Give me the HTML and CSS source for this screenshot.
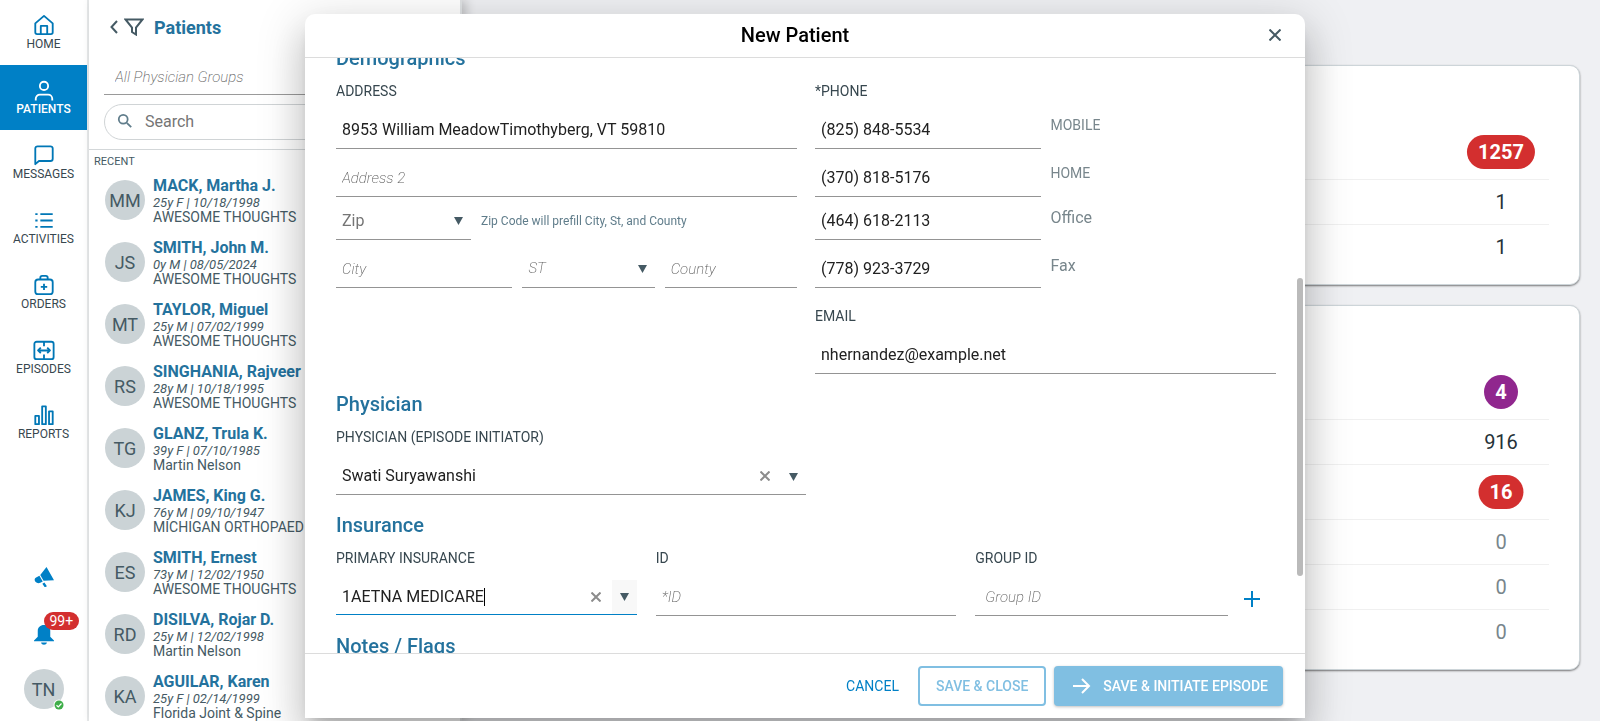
FILE: index.html
```
<!DOCTYPE html>
<html lang="en">
<head>
<meta charset="utf-8">
<meta name="viewport" content="width=device-width, initial-scale=1">
<title>New Patient</title>
<link rel="stylesheet" href="styles.css">
</head>
<body>
<div class="app">
  <nav class="nav">
    <a class="nav-item" href="#"><svg class="icon" viewBox="0 0 24 24"><path d="M2.500 10.200 12 2l9.500 8.200V20a2 2 0 0 1-2 2h-15a2 2 0 0 1-2-2z"/><path d="M8.500 22v-9h7v9"/></svg><span>HOME</span></a>
    <a class="nav-item nav-item-active" href="#"><svg class="icon" viewBox="0 0 24 24"><circle cx="12" cy="7.500" r="4.500"/><path d="M3 23.500v-2a4.500 4.500 0 0 1 4.500-4.500h9a4.500 4.500 0 0 1 4.500 4.500v2"/></svg><span>PATIENTS</span></a>
    <a class="nav-item" href="#"><svg class="icon" viewBox="0 0 24 24"><path d="M2.500 22V5a2.500 2.500 0 0 1 2.500-2.500h14a2.500 2.500 0 0 1 2.500 2.500v11a2.500 2.500 0 0 1-2.500 2.500H6.500z"/></svg><span>MESSAGES</span></a>
    <a class="nav-item" href="#"><svg class="icon" viewBox="0 0 24 24"><path d="M8 5.500h13.500M8 12.500h13.500M8 19.500h13.500M2.500 5.500h2.500M2.500 12.500h2.500M2.500 19.500h2.500"/></svg><span>ACTIVITIES</span></a>
    <a class="nav-item" href="#"><svg class="icon icon-wide" viewBox="0 0 24 24"><rect x="2.500" y="6" width="19" height="16" rx="3"/><path d="M8 6V4a2 2 0 0 1 2-2h4a2 2 0 0 1 2 2v2M12 10.500v7M8.500 14h7"/></svg><span>ORDERS</span></a>
    <a class="nav-item" href="#"><svg class="icon icon-wide" viewBox="0 0 24 24"><path d="M12 3H4a2.500 2.500 0 0 0-2.500 2.500v14A2.500 2.500 0 0 0 4 22h16a2.500 2.500 0 0 0 2.500-2.500v-14A2.500 2.500 0 0 0 20 3h-8M12 3v5M12 17v5M5.500 12.500h13M8.500 9.500l-3 3 3 3M15.500 9.500l3 3-3 3"/></svg><span>EPISODES</span></a>
    <a class="nav-item" href="#"><svg class="icon icon-wide" viewBox="0 0 24 24"><path d="M2.500 13h4v9h-4zM10 2.500h4V22h-4zM17.500 8h4v14h-4z"/></svg><span>REPORTS</span></a>
    <div class="nav-tools">
      <button class="tool" aria-label="Announcements"><svg class="icon-solid" viewBox="0 0 24 24"><path d="M15 0 24 16l-12.500.5L7.500 9.500zM6.500 10.500l4 7-3 1.500C2 21-1.500 15 2.500 12.500zM10 20l2.500-1.500 3 4.500-2.500 1.500z"/></svg></button>
      <button class="tool" aria-label="Notifications"><svg class="icon-solid" viewBox="0 0 24 24"><path d="M12 0C7.500 0 4.500 3 4.500 7v7L0 18.500v1h24v-1L19.500 14V7c0-4-3-7-7.500-7zM8.500 21h7c-.5 3.500-6.500 3.500-7 0z"/></svg><span class="badge">99+</span></button>
      <button class="tool avatar">TN<svg class="status" viewBox="0 0 12 12"><circle cx="6" cy="6" r="5.500" fill="#fff"/><circle cx="6" cy="6" r="4.500" fill="#3fae49"/><path d="M3.500 6.200l1.800 1.700 3.200-3.400" fill="none" stroke="#fff" stroke-width="1.200"/></svg></button>
    </div>
  </nav>

  <aside class="panel">
    <header class="panel-head">
      <button class="plain" aria-label="Back"><svg class="chevron" viewBox="0 0 8 14"><path d="M7 1 1.500 7 7 13"/></svg></button>
      <button class="plain" aria-label="Filter"><svg class="funnel" viewBox="0 0 20 18"><path d="M1.500 1.500h17L12 9.500V16.500L8 14V9.500z"/></svg></button>
      <h2>Patients</h2>
    </header>
    <div class="panel-filters">
      <input class="group-input" aria-label="Physician group" placeholder="All Physician Groups">
      <label class="search"><svg viewBox="0 0 18 18"><circle cx="7" cy="7" r="5"/><path d="M11 11l5 5"/></svg><input aria-label="Search" placeholder="Search"></label>
    </div>
    <div class="recent">RECENT</div>
    <ul class="patients">
      <li><span class="avatar">MM</span><div><a href="#">MACK, Martha J.</a><em>25y F | 10/18/1998</em><p>AWESOME THOUGHTS</p></div></li>
      <li><span class="avatar">JS</span><div><a href="#">SMITH, John M.</a><em>0y M | 08/05/2024</em><p>AWESOME THOUGHTS</p></div></li>
      <li><span class="avatar">MT</span><div><a href="#">TAYLOR, Miguel</a><em>25y M | 07/02/1999</em><p>AWESOME THOUGHTS</p></div></li>
      <li><span class="avatar">RS</span><div><a href="#">SINGHANIA, Rajveer</a><em>28y M | 10/18/1995</em><p>AWESOME THOUGHTS</p></div></li>
      <li><span class="avatar">TG</span><div><a href="#">GLANZ, Trula K.</a><em>39y F | 07/10/1985</em><p>Martin Nelson</p></div></li>
      <li><span class="avatar">KJ</span><div><a href="#">JAMES, King G.</a><em>76y M | 09/10/1947</em><p>MICHIGAN ORTHOPAED</p></div></li>
      <li><span class="avatar">ES</span><div><a href="#">SMITH, Ernest</a><em>73y M | 12/02/1950</em><p>AWESOME THOUGHTS</p></div></li>
      <li><span class="avatar">RD</span><div><a href="#">DISILVA, Rojar D.</a><em>25y M | 12/02/1998</em><p>Martin Nelson</p></div></li>
      <li><span class="avatar">KA</span><div><a href="#">AGUILAR, Karen</a><em>25y F | 02/14/1999</em><p>Florida Joint &amp; Spine</p></div></li>
    </ul>
  </aside>

  <main class="board">
    <section class="card">
      <ul>
        <li><span class="pill">1257</span></li>
        <li><span>1</span></li>
        <li><span>1</span></li>
      </ul>
    </section>
    <section class="card">
      <ul>
        <li><span class="pill pill-purple">4</span></li>
        <li><span>916</span></li>
        <li><span class="pill">16</span></li>
        <li><span class="zero">0</span></li>
        <li><span class="zero">0</span></li>
        <li><span class="zero">0</span></li>
      </ul>
    </section>
  </main>
</div>

<div class="overlay">
  <form class="dialog" role="dialog" aria-labelledby="dialog-title">
    <header class="dialog-head">
      <h1 id="dialog-title">New Patient</h1>
      <button type="button" class="plain close" aria-label="Close"><svg viewBox="0 0 12 12"><path d="M.5.5l11 11M11.500.5l-11 11"/></svg></button>
    </header>

    <div class="dialog-body">
      <div class="scrolled">
        <section class="section">
          <h2>Demographics</h2>
          <div class="halves">
            <div>
              <label class="caption" for="address">ADDRESS</label>
              <div class="stack">
                <input class="field" id="address" value="8953 William MeadowTimothyberg, VT 59810">
                <input class="field" aria-label="Address 2" placeholder="Address 2">
                <div class="zip-row">
                  <div class="pick"><select class="field gray" aria-label="Zip"><option>Zip</option></select><svg class="caret" viewBox="0 0 9 8"><path d="M0 0h9L4.500 8z"/></svg></div>
                  <span class="hint">Zip Code will prefill City, St, and County</span>
                </div>
                <div class="city-row">
                  <input class="field" aria-label="City" placeholder="City">
                  <div class="pick"><select class="field ghost" aria-label="State"><option>ST</option></select><svg class="caret" viewBox="0 0 9 8"><path d="M0 0h9L4.500 8z"/></svg></div>
                  <input class="field" aria-label="County" placeholder="County">
                </div>
              </div>
            </div>
            <div>
              <label class="caption" for="mobile">*PHONE</label>
              <div class="stack">
                <div class="phone"><input class="field" id="mobile" value="(825) 848-5534"><label class="small" for="mobile">MOBILE</label></div>
                <div class="phone"><input class="field" id="home" value="(370) 818-5176"><label class="small" for="home">HOME</label></div>
                <div class="phone"><input class="field" id="office" value="(464) 618-2113"><label for="office">Office</label></div>
                <div class="phone"><input class="field" id="fax" value="(778) 923-3729"><label for="fax">Fax</label></div>
              </div>
              <div class="email">
                <label class="caption" for="email">EMAIL</label>
                <input class="field" id="email" type="email" value="nhernandez@example.net">
              </div>
            </div>
          </div>
        </section>

        <section class="section">
          <h2>Physician</h2>
          <div class="physician">
            <label class="caption" for="physician">PHYSICIAN (EPISODE INITIATOR)</label>
            <div class="field combo">
              <input id="physician" value="Swati Suryawanshi">
              <span class="space"></span>
              <button type="button" class="clear" aria-label="Clear physician"><svg viewBox="0 0 10 10"><path d="M.5.5l9 9M9.500.5l-9 9"/></svg></button>
              <button type="button" class="drop" aria-label="Open physicians"><svg viewBox="0 0 9 8"><path d="M0 0h9L4.500 8z"/></svg></button>
            </div>
          </div>
        </section>

        <section class="section">
          <h2>Insurance</h2>
          <div class="insurance">
            <div>
              <label class="caption" for="insurer">PRIMARY INSURANCE</label>
              <div class="field combo combo-active">
                <input id="insurer" value="1AETNA MEDICARE"><span class="cursor"></span>
                <span class="space"></span>
                <button type="button" class="clear" aria-label="Clear insurance"><svg viewBox="0 0 10 10"><path d="M.5.5l9 9M9.500.5l-9 9"/></svg></button>
                <button type="button" class="drop" aria-label="Open insurances"><svg viewBox="0 0 9 8"><path d="M0 0h9L4.500 8z"/></svg></button>
              </div>
            </div>
            <div>
              <label class="caption" for="policy">ID</label>
              <input class="field" id="policy" placeholder="*ID">
            </div>
            <div class="group-cell">
              <div>
                <label class="caption" for="group">GROUP ID</label>
                <input class="field field-wide-pad" id="group" placeholder="Group ID">
              </div>
              <button type="button" class="plain add" aria-label="Add insurance"><svg viewBox="0 0 16 16"><path d="M8 0v16M0 8h16"/></svg></button>
            </div>
          </div>
        </section>

        <section class="section">
          <h2>Notes / Flags</h2>
        </section>
      </div>
      <span class="scroll-thumb"></span>
    </div>

    <footer class="dialog-foot">
      <button type="button" class="btn btn-text">CANCEL</button>
      <button type="button" class="btn btn-outline">SAVE &amp; CLOSE</button>
      <button type="button" class="btn btn-fill"><svg viewBox="0 0 18 16"><path d="M0 8h16M9 1l7 7-7 7"/></svg>SAVE &amp; INITIATE EPISODE</button>
    </footer>
  </form>
</div>
</body>
</html>
```

FILE: styles.css
```
* { box-sizing: border-box; }

body {
  margin: 0;
  font-family: Roboto, "Liberation Sans", sans-serif;
  font-size: 16px;
  color: #263238;
  overflow: hidden;
}

h1, h2, p, ul { margin: 0; padding: 0; }
ul { list-style: none; }
a { text-decoration: none; }
button, input, select { font: inherit; color: inherit; }
button { padding: 0; border: 0; background: none; cursor: pointer; }
svg { display: block; fill: none; stroke: currentColor; }

.app { display: flex; height: 100vh; background: #eff0f3; }

/* Navigation rail */
.nav {
  flex: none;
  display: flex;
  flex-direction: column;
  width: 89px;
  background: #fff;
  border-right: 2px solid #e8eaeb;
}
.nav-item {
  display: flex;
  flex-direction: column;
  align-items: center;
  height: 65px;
  padding-top: 14px;
  font-size: 12px;
  line-height: 16px;
  color: #37474f;
}
.icon { width: 22px; height: 22px; stroke: #0077b6; stroke-width: 2; stroke-linejoin: round; }
.icon-wide { width: 24px; }
.nav-item-active { background: #0080c6; color: #fff; font-weight: 500; }
.nav-item-active .icon { stroke: #fff; }
.nav-tools {
  display: flex;
  flex-direction: column;
  align-items: center;
  margin-top: auto;
  padding-bottom: 12px;
}
.tool { position: relative; margin-bottom: 38px; color: #0080c6; }
.tool.avatar { margin: -14px 0 0; color: #455a64; }
.icon-solid { width: 20px; height: 20px; fill: currentColor; stroke: none; }
.badge {
  position: absolute;
  left: 10px;
  top: -13px;
  padding: 0 6px;
  border-radius: 9px;
  background: #d32f2f;
  color: #fff;
  font-size: 14px;
  line-height: 18px;
}
.status { position: absolute; right: -1px; bottom: -2px; width: 12px; height: 12px; stroke: none; }
.avatar {
  flex: none;
  display: flex;
  align-items: center;
  justify-content: center;
  width: 40px;
  height: 40px;
  border-radius: 50%;
  background: #cbd3d6;
  color: #455a64;
  font-size: 18px;
}

/* Patient list */
.panel {
  flex: none;
  width: 373px;
  background: #fff;
  border-right: 2px solid #dfe2e4;
  box-shadow: 4px 0 10px rgba(0, 0, 0, .2);
  z-index: 1;
}
.plain { display: block; color: #455a64; }
.panel-head { display: flex; align-items: center; gap: 6px; height: 52px; padding: 2px 0 0 21px; }
.panel-head h2 { margin-left: 4px; padding-top: 1px; font-size: 18px; line-height: 24px; font-weight: 700; color: #24729d; }
.chevron { width: 8px; height: 14px; stroke-width: 2; }
.funnel { width: 20px; height: 18px; stroke-width: 2; }
.panel-filters { padding: 9px 15px 9px; border-bottom: 1px solid #d3d7d9; }
.group-input {
  display: block;
  width: 100%;
  height: 34px;
  padding: 0 11px 2px;
  border: 0;
  border-bottom: 1px solid #9a9a9a;
  font-size: 15px;
}
.group-input::placeholder, .field::placeholder, .ghost { color: #616161; font-style: italic; font-weight: 200; opacity: 1; }
.search {
  display: flex;
  align-items: center;
  gap: 12px;
  height: 36px;
  margin-top: 9px;
  padding: 0 0 2px 12px;
  border: 1px solid #d0d4d6;
  border-radius: 18px;
}
.search svg { width: 16px; height: 16px; color: #607d8b; stroke-width: 2; }
.search input { flex: 1; min-width: 0; border: 0; background: none; outline: 0; padding: 0; }
.search input::placeholder { color: #757575; opacity: 1; }
.recent { padding: 4px 5px 0; font-size: 11px; line-height: 15px; color: #455a64; }
.patients li { display: flex; align-items: center; gap: 8px; height: 62px; padding: 0 16px; }
.patients a, .patients em, .patients p { display: block; white-space: nowrap; line-height: 15px; font-size: 14px; color: #455a64; }
.patients a { font-size: 16px; line-height: 20px; font-weight: 700; color: #24729d; }
.patients em { font-size: 13px; line-height: 14px; }

/* Dashboard cards */
.board { flex: 1; display: flex; flex-direction: column; gap: 20px; padding: 65px 20px 0; }
.card {
  padding: 59px 30px 15px;
  background: #fff;
  border: 1px solid #cdd5d9;
  border-radius: 10px;
  box-shadow: 0 1px 2px rgba(0, 0, 0, .5);
}
.card li { display: flex; justify-content: flex-end; padding: 10px 0; border-bottom: 1px solid #f0f0f0; }
.card li:last-child { border-bottom: 0; }
.card span {
  min-width: 34px;
  margin-right: 48px;
  font-size: 20px;
  line-height: 24px;
  text-align: center;
  translate: 50% 0;
}
.card .pill { padding: 5px 11px; border-radius: 17px; background: #d32f2f; color: #fff; font-weight: 700; }
.card .pill-purple { padding: 5px 0; background: #90278e; }
.card .zero { color: #78868c; }

/* Dialog */
.overlay {
  position: fixed;
  inset: 0;
  z-index: 2;
  display: flex;
  justify-content: center;
  padding: 14px 0 3px 10px;
}
.dialog {
  display: flex;
  flex-direction: column;
  width: 1000px;
  max-width: 100%;
  background: #fff;
  border-radius: 10px 10px 0 0;
  box-shadow: 0 11px 15px -7px rgba(0, 0, 0, .2), 0 24px 38px 3px rgba(0, 0, 0, .14), 0 9px 46px 8px rgba(0, 0, 0, .12);
}
.dialog-head {
  position: relative;
  display: flex;
  align-items: center;
  justify-content: center;
  height: 44px;
  padding-bottom: 1px;
  border-bottom: 1px solid #dcdcdc;
}
.dialog-head h1 { margin-right: 20px; font-size: 20px; line-height: 24px; font-weight: 500; color: #000; }
.close { position: absolute; right: 24px; top: 15px; }
.close svg { width: 12px; height: 12px; stroke-width: 2; }
.dialog-body { position: relative; flex: 1; min-height: 0; overflow: hidden; padding: 0 29px 0 31px; }
.scrolled { margin-top: -12px; }
.scroll-thumb { position: absolute; right: 2px; top: 37%; width: 6px; height: 50%; border-radius: 3px; background: #bababa; }

.section { margin-bottom: 18px; }
.section h2 { margin-bottom: 11px; font-size: 20px; line-height: 24px; font-weight: 500; color: #24729d; }
.caption { display: block; margin-bottom: 12px; font-size: 14px; line-height: 20px; color: #37474f; }
.halves { display: grid; grid-template-columns: 1fr 1fr; gap: 18px; }
.stack { display: grid; grid-template-rows: 36px 36px 31px 36px; row-gap: 12px; }
.stack > :nth-child(3) { margin-top: -5px; }
.field {
  display: block;
  width: 100%;
  min-width: 0;
  height: 36px;
  padding: 0 6px 3px;
  border: 0;
  border-bottom: 1px solid #949494;
  border-radius: 0;
  outline: 0;
  background: none;
  font-size: 16px;
  color: #212121;
}
.field::placeholder { font-size: 15px; }
.field.ghost { font-size: 15px; color: #616161; }
.field.gray { color: #757575; }
.field-wide-pad { padding-left: 10px; }
.pick { position: relative; }
.pick select { appearance: none; }
.caret { position: absolute; right: 8px; top: 13px; width: 9px; height: 8px; fill: #455a64; stroke: none; pointer-events: none; }
.zip-row { display: flex; align-items: center; gap: 10px; }
.zip-row .pick { width: 135px; }
.hint { padding-bottom: 2px; font-size: 12px; line-height: 16px; color: #607d8b; }
.city-row { display: grid; grid-template-columns: 4fr 3fr 3fr; gap: 10px; }
.phone { display: grid; grid-template-columns: 1fr 1fr; gap: 10px; }
.phone label { line-height: 28px; color: #78868c; }
.phone .small { font-size: 14px; line-height: 24px; }
.email { margin-top: 18px; }
.physician { width: 50%; }
.combo { display: flex; align-items: stretch; padding: 0; }
.combo input {
  field-sizing: content;
  min-width: 0;
  padding: 0 0 3px 6px;
  border: 0;
  outline: 0;
  background: none;
}
.combo .space { flex: 1; }
.cursor { width: 1px; margin: 8px 0; background: #000; }
.clear { width: 32px; padding-bottom: 1px; color: #8c8c8c; }
.clear svg { width: 10px; height: 10px; margin: 0 auto; stroke-width: 2; }
.drop { width: 25px; color: #455a64; }
.drop svg { width: 9px; height: 8px; margin: 0 auto; fill: currentColor; stroke: none; }
.field.combo-active { height: 35px; border-bottom: 1px solid #0080c6; }
.combo-active input { padding-bottom: 1px; }
.combo-active .drop { background: #f8f8f8; }
.insurance { display: grid; grid-template-columns: 1fr 1fr 1fr; gap: 19px; }
.group-cell { display: grid; grid-template-columns: 1fr 32px; gap: 16px; }
.add { justify-self: start; align-self: end; padding-bottom: 9px; color: #0080c6; }
.add svg { width: 16px; height: 16px; stroke-width: 2; }

.dialog-foot {
  display: flex;
  align-items: center;
  justify-content: flex-end;
  gap: 8px;
  height: 65px;
  padding-right: 22px;
  border-top: 1px solid #dcdcdc;
}
.btn { height: 40px; padding: 0 16px; border-radius: 4px; font-size: 14px; font-weight: 500; }
.btn-text { margin-right: 3px; padding: 0 8px; color: #0080c6; font-weight: 400; }
.btn-outline { border: 2px solid #80bfe2; color: #80bfe2; }
.btn-fill { display: flex; align-items: center; gap: 12px; padding: 0 15px 0 19px; background: #80bfe2; color: #fff; box-shadow: 0 1px 3px rgba(0, 0, 0, .25); }
.btn-fill svg { width: 18px; height: 16px; stroke-width: 2; }
```
